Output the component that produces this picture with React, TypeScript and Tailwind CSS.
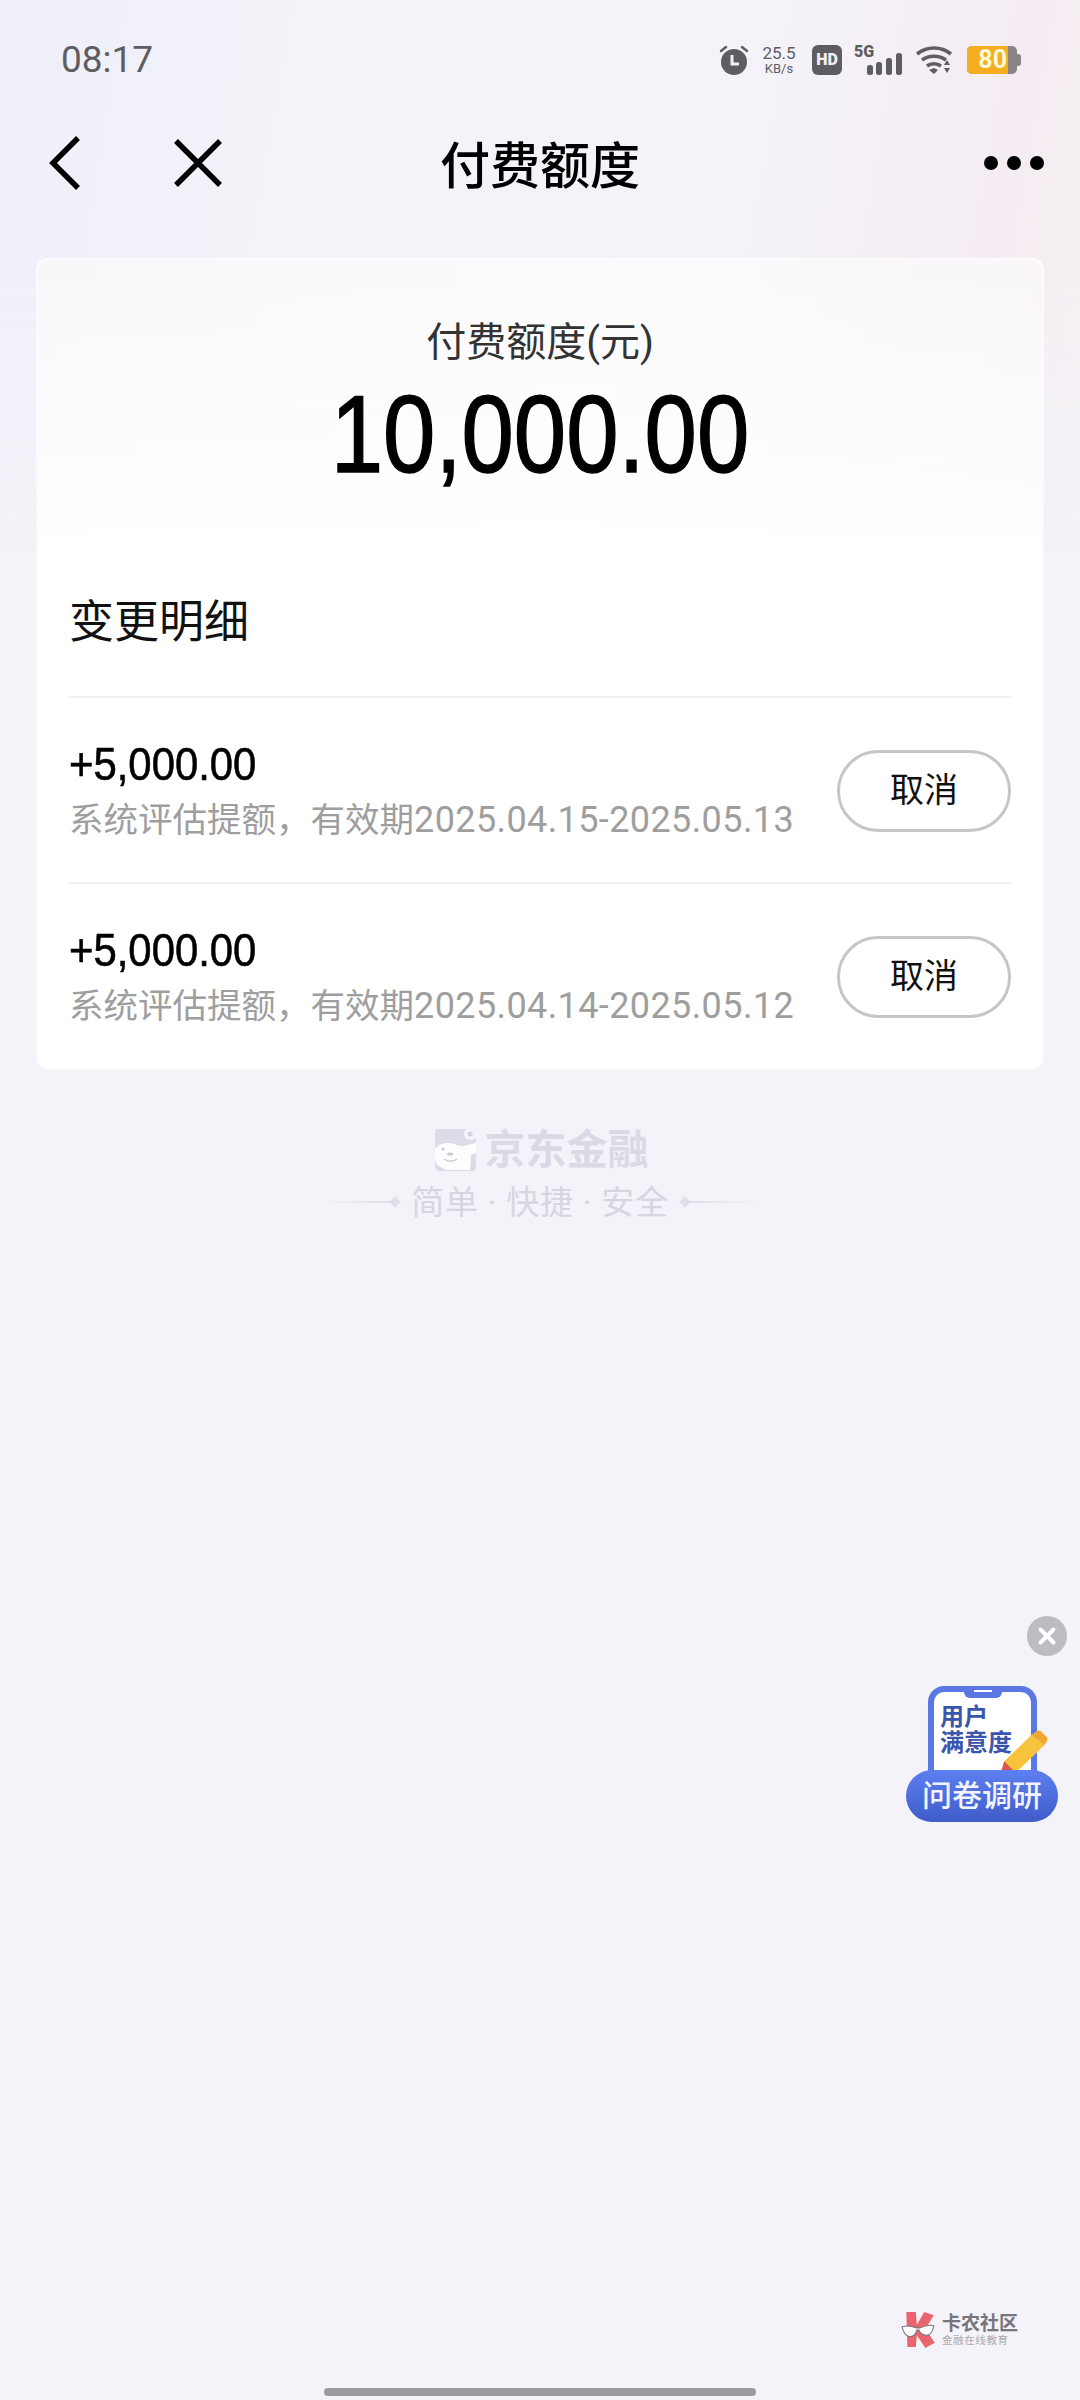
const cjk = "font-['Roboto','Noto_Sans_CJK_SC',sans-serif]";

const rows = [
  { amount: '+5,000.00', prefix: '系统评估提额，有效期', dates: '2025.04.15-2025.05.13' },
  { amount: '+5,000.00', prefix: '系统评估提额，有效期', dates: '2025.04.14-2025.05.12' },
];

function StatusIcons() {
  return (
    <div className="flex items-center text-[#5f5d62]">
      {/* alarm */}
      <svg width="32" height="32" viewBox="0 0 32 32" className="mr-[10px]">
        <circle cx="16" cy="18" r="13" fill="#5f5d62" />
        <path d="M3 7l5-4M29 7l-5-4" stroke="#5f5d62" strokeWidth="2.5" strokeLinecap="round" />
        <path d="M14 11v9h7" fill="none" stroke="#f2eff6" strokeWidth="3" />
      </svg>
      <div className="mr-[14px] flex w-[38px] flex-col items-center font-['Roboto',sans-serif] leading-none">
        <span className="text-[17px]">25.5</span>
        <span className="text-[13px]">KB/s</span>
      </div>
      <div className="mr-[12px] flex h-[30px] w-[30px] items-center justify-center rounded-[6px] bg-[#5f5d62] font-['Roboto',sans-serif] text-[16px] font-black text-[#f2eff6]">
        HD
      </div>
      {/* 5G signal */}
      <div className="relative mr-[13px] h-[32px] w-[48px]">
        <span className="absolute left-0 top-[-2px] font-['Roboto',sans-serif] text-[16px] font-black leading-[20px]">5G</span>
        <svg width="48" height="32" viewBox="0 0 48 32" className="absolute left-0 top-0">
          <rect x="13" y="21" width="6" height="10" rx="2.5" fill="#5f5d62" />
          <rect x="22" y="18" width="6" height="13" rx="2.5" fill="#5f5d62" />
          <rect x="32" y="14" width="6" height="17" rx="2.5" fill="#5f5d62" />
          <rect x="42" y="9" width="6" height="22" rx="2.5" fill="#5f5d62" />
        </svg>
      </div>
      {/* wifi */}
      <svg width="38" height="30" viewBox="0 0 38 30" className="mr-[14px]">
        <path d="M2 9c10-8 24-8 34 0M7 15c7-5 17-5 24 0M12 21c4-3 10-3 14 0" fill="none" stroke="#5f5d62" strokeWidth="3.6" />
        <path d="M14 25l5-2 4 2-4 4z" fill="#5f5d62" />
        <path d="M29 20l3-5 3 5zM29 23h6l-3 5z" fill="#5f5d62" />
      </svg>
      {/* battery */}
      <div className="flex h-[28px] w-[54px] items-center">
        <div className="flex h-[28px] w-[50px] overflow-hidden rounded-[5px] bg-[#8a8488]">
          <div className="flex w-[41px] items-center justify-end bg-[#f5ae1f] pr-[1px] font-['Roboto',sans-serif] text-[25px] font-bold leading-none text-[#fff9d8]">
            80
          </div>
        </div>
        <div className="h-[12px] w-[4px] rounded-r-[3px] bg-[#8a8488]" />
      </div>
    </div>
  );
}

function JdLogo() {
  return (
    <svg width="46" height="46" viewBox="0 0 46 46" className="mr-[7px]">
      <path d="M6 2h28a10 10 0 0 0 10 10v28a4 4 0 0 1-4 4H8a5 5 0 0 1-5-5V5a3 3 0 0 1 3-3z" fill="#dcdce8" />
      <circle cx="38" cy="7" r="6" fill="#f3f3f9" />
      <circle cx="38" cy="7" r="2.5" fill="#d2d2e0" />
      <path d="M3 22c4-6 14-8 22-4 3 1 7 2 10 0l9-2v10l-5 2-1 15H14L5 38 3 32z" fill="#fdfdfe" />
      <circle cx="11" cy="22" r="1.5" fill="#c9c9d6" />
      <ellipse cx="18" cy="27" rx="3" ry="1.5" fill="#c9c9d6" />
      <path d="M12 32c4 3 10 3 13 0" fill="none" stroke="#c9c9d6" strokeWidth="1.5" />
    </svg>
  );
}

function Survey() {
  return (
    <div className="absolute right-[12px] top-[1616px] flex w-[162px] flex-col items-end">
      <div className="mr-[1px] flex h-[40px] w-[40px] items-center justify-center rounded-full bg-[#bcbcc2]">
        <svg width="20" height="20" viewBox="0 0 20 20">
          <path d="M3.5 3.5l13 13M16.5 3.5l-13 13" stroke="#fff" strokeWidth="4" strokeLinecap="round" />
        </svg>
      </div>
      <div className="relative mt-[30px] h-[136px] w-full">
        <div className="absolute left-[22px] top-0 h-[100px] w-[109px] rounded-t-[16px] border-[6px] border-b-0 border-[#5b77e4] bg-white">
          <div className="absolute left-1/2 top-[-6px] flex h-[12px] w-[38px] -translate-x-1/2 items-start justify-center rounded-b-[6px] bg-[#5b77e4] pt-[4px]">
            <div className="h-[2px] w-[18px] bg-white" />
          </div>
          <div className={`${cjk} absolute left-[6px] top-[12px] text-[24px] font-bold leading-[26px] text-[#3a55ad]`}>
            用户
            <br />
            满意度
          </div>
        </div>
        <svg width="52" height="52" viewBox="0 0 50 50" className="absolute left-[92px] top-[42px]">
          <path d="M6 32L33 6l11 11-27 26-15 3z" fill="#f7c23c" />
          <path d="M33 6l4-3q2-1 4 0l6 6q1 2 0 4l-3 4z" fill="#f0a830" />
          <path d="M6 32l11 11-15 3z" fill="#d9584a" />
        </svg>
        <div className={`${cjk} absolute bottom-0 left-0 flex h-[52px] w-[152px] items-center justify-center rounded-full bg-gradient-to-b from-[#5d7ff0] to-[#3f5cc9] text-[30px] font-medium leading-none text-[#f2f4ff]`}>
          问卷调研
        </div>
      </div>
    </div>
  );
}

export default function App() {
  return (
    <div className="relative h-[2400px] w-[1080px] overflow-hidden bg-[#f3f3f9] font-['Roboto','Noto_Sans_CJK_SC',sans-serif]">
      {/* header wash */}
      <div className="absolute left-0 top-0 h-[560px] w-full bg-[linear-gradient(100deg,#eeeff9_0%,#f4f3f9_30%,#f4f3f9_65%,#f4ecf2_88%,#f6f0f4_100%)] [mask-image:linear-gradient(to_bottom,black_50%,transparent)]" />

      <div className="relative">
        {/* status bar */}
        <div className="flex h-[118px] items-center justify-between pl-[61px] pr-[59px] pt-[1px]">
          <span className="font-['Roboto',sans-serif] text-[37px] leading-none text-[#5f5d62]">08:17</span>
          <StatusIcons />
        </div>

        {/* nav */}
        <div className="relative flex h-[90px] items-center justify-between pl-[48px] pr-[36px]">
          <div className="flex items-center gap-[91px]">
            <svg width="34" height="56" viewBox="0 0 34 56">
              <path d="M30 3L5 28l25 25" fill="none" stroke="#000" strokeWidth="5.5" />
            </svg>
            <svg width="50" height="50" viewBox="0 0 50 50">
              <path d="M3 3l44 44M47 3L3 47" fill="none" stroke="#000" strokeWidth="5.5" />
            </svg>
          </div>
          <h1 className={`${cjk} absolute left-0 right-0 top-[24px] text-center text-[50px] font-medium leading-none text-black`}>付费额度</h1>
          <div className="flex items-center gap-[9px]">
            <div className="h-[14px] w-[14px] rounded-full bg-black" />
            <div className="h-[14px] w-[14px] rounded-full bg-black" />
            <div className="h-[14px] w-[14px] rounded-full bg-black" />
          </div>
        </div>

        {/* card */}
        <div className="mx-[36px] mt-[50px] h-[812px] rounded-[12px] border-2 border-[#fbfbfd] bg-[linear-gradient(to_bottom,transparent,white_36%),linear-gradient(100deg,#f8f8fb,#fbfbfd_50%,#f9f4f7_100%)] px-[31px]">
          <div className={`${cjk} pt-[56px] text-center text-[40px] leading-[54px] text-[#333]`}>付费额度(元)</div>
          <div className="mt-[4px] scale-x-[0.855] text-center font-['Liberation_Sans',sans-serif] text-[110px] leading-[120px] text-black [-webkit-text-stroke:1.5px_black]">10,000.00</div>
          <div className={`${cjk} mt-[99px] text-[45px] leading-[60px] text-[#111]`}>变更明细</div>

          <div className="mt-[43px]">
            {rows.map(r => (
              <div key={r.dates} className="flex h-[186px] items-center justify-between border-t-2 border-[#f3f3f5]">
                <div>
                  <div className="origin-left scale-x-[0.91] font-['Liberation_Sans',sans-serif] text-[46px] leading-[56px] text-black [-webkit-text-stroke:0.6px_black]">{r.amount}</div>
                  <div className={`${cjk} mt-[4px] text-[34.5px] leading-[48px] text-[#9e9e9e]`}>
                    {r.prefix}
                    <span className="text-[36px] tracking-[0.4px]">{r.dates}</span>
                  </div>
                </div>
                <button className={`${cjk} mt-[1px] h-[82px] w-[174px] rounded-full border-[3px] border-[#c6c6c6] text-[34px] text-[#111]`}>取消</button>
              </div>
            ))}
          </div>
        </div>

        {/* brand footer */}
        <div className="mt-[57px] flex flex-col items-center">
          <div className="flex h-[46px] items-center">
            <JdLogo />
            <span className={`${cjk} text-[41px] font-bold leading-none text-[#dadae6]`}>京东金融</span>
          </div>
          <div className="mt-[7px] flex h-[44px] items-center">
            <div className="h-[2px] w-[70px] bg-gradient-to-r from-transparent to-[#dedee8]" />
            <div className="mr-[12px] h-[8px] w-[8px] rotate-45 bg-[#dedee8]" />
            <span className={`${cjk} whitespace-pre text-[33px] leading-none tracking-[0.8px] text-[#d6d6e2]`}>简单 · 快捷 · 安全</span>
            <div className="ml-[12px] h-[8px] w-[8px] rotate-45 bg-[#dedee8]" />
            <div className="h-[2px] w-[70px] bg-gradient-to-l from-transparent to-[#dedee8]" />
          </div>
        </div>
      </div>

      <Survey />

      {/* watermark */}
      <div className="absolute left-[900px] top-[2311px] flex items-center">
        <svg width="38" height="38" viewBox="0 0 34 36" className="mr-[4px]">
          <path d="M5 1h9l1 12 7-12 9 3-8 13 9 13-9 5-8-12-1 11H6z" fill="#e9646f" />
          <path d="M1 15c4-1 9-1 13 1l4 0c4-2 9-3 13-2-1 5-3 9-7 9-4 0-6-2-7-5h-2c-1 4-4 7-8 6-3-1-5-5-6-9z" fill="#fff" stroke="#77757b" strokeWidth="1" />
        </svg>
        <div className={`${cjk} flex flex-col`}>
          <span className="text-[19px] font-bold leading-[21px] text-[#77757b]">卡农社区</span>
          <span className="text-[10.5px] leading-[13px] tracking-[0.6px] text-[#a9a8ae]">金融在线教育</span>
        </div>
      </div>

      {/* gesture bar */}
      <div className="absolute left-[324px] top-[2388px] h-[8px] w-[432px] rounded-full bg-[#9a9a9e]" />
    </div>
  );
}
